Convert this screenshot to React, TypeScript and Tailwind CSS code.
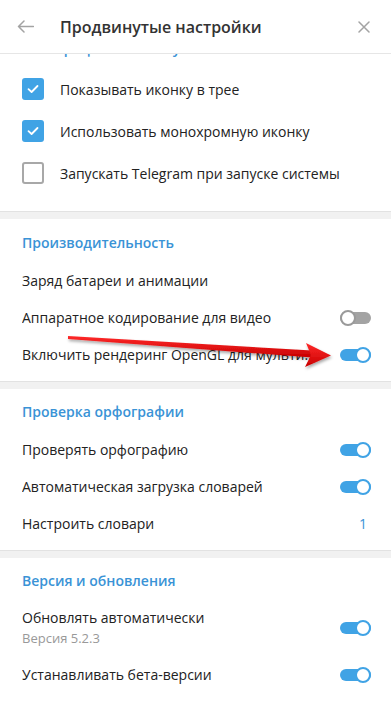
import React from 'react';

const font = { fontFamily: '"Open Sans", "Noto Sans", sans-serif' };

const Toggle = ({ on }: { on: boolean }) => (
  <div className="relative w-[31px] h-[16px] flex items-center shrink-0">
    <div className={`h-[12px] w-full rounded-full ${on ? 'bg-[#40a3e5]' : 'bg-[#a3a3a3]'}`} />
    <div
      className={`absolute top-0 w-[16px] h-[16px] rounded-full bg-white border-2 ${
        on ? 'right-0 border-[#40a3e5]' : 'left-0 border-[#9a9a9a]'
      }`}
    />
  </div>
);

const Checkbox = ({ checked }: { checked: boolean }) =>
  checked ? (
    <div className="w-[22px] h-[22px] rounded-[3px] bg-[#40a3e5] flex items-center justify-center shrink-0">
      <svg width="12" height="10" viewBox="0 0 12 10" fill="none">
        <path d="M1.5 5.2 L4.6 8 L10.5 2" stroke="white" strokeWidth="1.8" strokeLinecap="round" strokeLinejoin="round" />
      </svg>
    </div>
  ) : (
    <div className="w-[22px] h-[22px] rounded-[3px] border-2 border-[#a8a8a8] bg-white shrink-0" />
  );

const SectionTitle = ({ children }: { children: React.ReactNode }) => (
  <div className="h-[28px] flex items-center px-[22px] mb-[6px] text-[14px] font-semibold text-[#3a93d6]">
    {children}
  </div>
);

const Band = () => <div className="h-2 bg-[#f1f1f1] border-t border-[#e2e2e2]" />;

const ToggleRow = ({ label, on, right }: { label: string; on?: boolean; right?: React.ReactNode }) => (
  <div className="h-[37px] flex items-center justify-between pl-[22px] pr-[20px]">
    <span className="text-[14px] text-[#222] truncate">{label}</span>
    {right !== undefined ? right : on !== undefined && <Toggle on={on} />}
  </div>
);

const CheckRow = ({ label, checked }: { label: string; checked: boolean }) => (
  <div className="h-[42px] flex items-center gap-4 px-[22px]">
    <Checkbox checked={checked} />
    <span className="text-[14px] text-[#222]">{label}</span>
  </div>
);

export default function App() {
  return (
    <div className="relative w-[391px] h-[702px] bg-white flex flex-col overflow-hidden" style={font}>
      <div className="h-[54px] shrink-0 flex items-center border-b border-[#e6e6e6] bg-white z-10">
        <div className="w-[60px] pl-[17px] flex items-center">
          <svg width="17" height="13" viewBox="0 0 17 13" fill="none">
            <path d="M16.5 6.5 H1.5 M7 1 L1.5 6.5 L7 12" stroke="#a3a3a3" strokeWidth="1.5" strokeLinecap="round" strokeLinejoin="round" />
          </svg>
        </div>
        <div className="flex-1 text-[16px] font-semibold text-[#333]">Продвинутые настройки</div>
        <div className="pr-[21px] flex items-center">
          <svg width="12" height="12" viewBox="0 0 12 12" fill="none">
            <path d="M1 1 L11 11 M11 1 L1 11" stroke="#a3a3a3" strokeWidth="1.5" strokeLinecap="round" />
          </svg>
        </div>
      </div>

      <div className="flex-1 overflow-hidden">
        <div className="-mt-[20px]">
          <SectionTitle>Интеграция в систему</SectionTitle>
          <CheckRow label="Показывать иконку в трее" checked />
          <CheckRow label="Использовать монохромную иконку" checked />
          <CheckRow label="Запускать Telegram при запуске системы" checked={false} />
          <div className="h-[17px]" />
          <Band />

          <div className="pt-[9px] pb-[8px]">
            <SectionTitle>Производительность</SectionTitle>
            <ToggleRow label="Заряд батареи и анимации" />
            <ToggleRow label="Аппаратное кодирование для видео" on={false} />
            <ToggleRow label="Включить рендеринг OpenGL для мульти..." on />
          </div>
          <Band />

          <div className="pt-[8px] pb-[8px]">
            <SectionTitle>Проверка орфографии</SectionTitle>
            <ToggleRow label="Проверять орфографию" on />
            <ToggleRow label="Автоматическая загрузка словарей" on />
            <ToggleRow
              label="Настроить словари"
              right={<span className="text-[14px] text-[#3a93d6] pr-[4px]">1</span>}
            />
          </div>
          <Band />

          <div className="pt-[8px]">
            <SectionTitle>Версия и обновления</SectionTitle>
            <div className="h-[56px] flex items-center justify-between pl-[22px] pr-[20px]">
              <div className="flex flex-col">
                <span className="text-[14px] text-[#222] leading-[20px]">Обновлять автоматически</span>
                <span className="text-[13px] text-[#999] leading-[20px]">Версия 5.2.3</span>
              </div>
              <Toggle on />
            </div>
            <ToggleRow label="Устанавливать бета-версии" on />
          </div>
        </div>
      </div>

      <svg className="absolute left-0 top-0 pointer-events-none" width="391" height="702" viewBox="0 0 391 702">
        <defs>
          <linearGradient id="ar" x1="0" y1="0" x2="0" y2="1">
            <stop offset="0" stopColor="#ff2a2a" />
            <stop offset="1" stopColor="#c80000" />
          </linearGradient>
          <filter id="sh" x="-10%" y="-50%" width="120%" height="200%">
            <feDropShadow dx="1" dy="2" stdDeviation="1.4" floodColor="#000" floodOpacity="0.35" />
          </filter>
        </defs>
        <g filter="url(#sh)" fill="url(#ar)">
          <polygon points="68,336 312,350.5 312,357.5 68,339" />
          <polygon points="306,343 331,355.5 305,367 311,355" />
        </g>
      </svg>
    </div>
  );
}
